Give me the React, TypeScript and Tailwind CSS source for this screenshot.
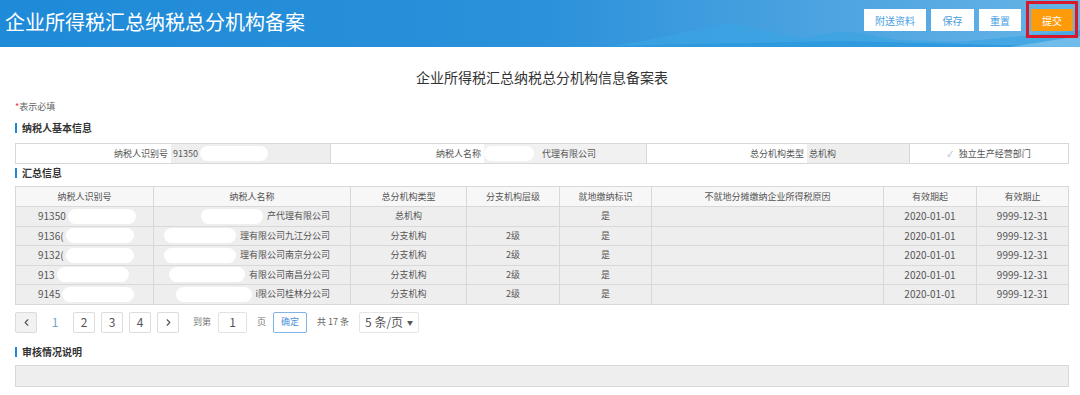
import React from "react";
import { ChevronLeft, ChevronRight } from "lucide-react";

const font = { fontFamily: '"Noto Sans CJK SC", "Noto Sans", sans-serif' };

const rows = [
  { id: "91350", name: "产代理有限公司", type: "总机构", level: "", idBlob: "w-[68px]", nameBlob: "w-[62px]" },
  { id: "9136(", name: "理有限公司九江分公司", type: "分支机构", level: "2级", idBlob: "w-[68px]", nameBlob: "w-[72px]" },
  { id: "9132(", name: "理有限公司南京分公司", type: "分支机构", level: "2级", idBlob: "w-[68px]", nameBlob: "w-[72px]" },
  { id: "913", name: "有限公司南昌分公司", type: "分支机构", level: "2级", idBlob: "w-[72px]", nameBlob: "w-[76px]" },
  { id: "9145", name: "i限公司桂林分公司", type: "分支机构", level: "2级", idBlob: "w-[72px]", nameBlob: "w-[76px]" },
];

function Blob({ w }: { w: string }) {
  return <span className={`inline-block h-[15px] shrink-0 ${w} rounded-full bg-white align-middle`} />;
}

function SectionTitle({ children }: { children: React.ReactNode }) {
  return (
    <div className="flex items-center gap-[5px] text-[10px] font-bold leading-[12px] text-[#333]">
      <span className="h-[10px] w-[2px] bg-[#1e88d8]" />
      {children}
    </div>
  );
}

function PageBox({ children, gray }: { children: React.ReactNode; gray?: boolean }) {
  return (
    <div
      className={`flex h-[21px] w-[22px] items-center justify-center rounded-[2px] border border-[#dcdcdc] text-[12px] text-[#555] ${
        gray ? "bg-[#f2f2f2]" : "bg-white"
      }`}
    >
      {children}
    </div>
  );
}

export default function App() {
  return (
    <div className="h-[395px] w-[1080px] overflow-hidden bg-white" style={font}>
      {/* header */}
      <div className="relative flex h-[47px] items-start justify-between bg-gradient-to-r from-[#1e8ad8] via-[#2a91da] to-[#66b4e6]">
        <svg className="absolute bottom-0 left-[540px] h-[47px] w-[540px]" viewBox="0 0 540 47" preserveAspectRatio="none">
          <path d="M60 47 C120 40 150 30 180 24 C200 22 220 30 250 36 C270 40 280 34 300 32 C320 31 330 36 360 40 L420 42 L540 30 L540 47 Z" fill="#3aa4e2" opacity="0.7" />
          <path d="M0 47 L160 44 L300 41 L420 44 L540 47 Z" fill="#2a97dd" opacity="0.8" />
          <path d="M470 47 L540 36 L540 47 Z" fill="#8cc9ee" opacity="0.6" />
        </svg>
        <div className="relative pl-[5px] pt-[9px] text-[20px] leading-[26px] text-white">企业所得税汇总纳税总分机构备案</div>
        <div className="relative flex items-start gap-[5px] pr-[2px] pt-[9px] text-[10px]">
          <div className="flex h-[22px] w-[62px] items-center justify-center bg-white text-[#4a9fe0]">附送资料</div>
          <div className="flex h-[22px] w-[43px] items-center justify-center bg-white text-[#4a9fe0]">保存</div>
          <div className="flex h-[22px] w-[42px] items-center justify-center bg-white text-[#4a9fe0]">重置</div>
          <div className="-mt-[8px] border-[3px] border-[#d7192b] p-[5px_2px_4px]">
            <div className="flex h-[22px] w-[42px] items-center justify-center bg-[#ff9a0a] text-white">提交</div>
          </div>
        </div>
      </div>

      <div className="pl-[15px] pr-[11px]">
        <div className="pt-[21px] text-center text-[14px] leading-[18px] text-[#333]">企业所得税汇总纳税总分机构信息备案表</div>
        <div className="mt-[15px] text-[9px] leading-[12px] text-[#666]">
          <span className="text-[#e33]">*</span>表示必填
        </div>

        <div className="mt-[9px]">
          <SectionTitle>纳税人基本信息</SectionTitle>
        </div>
        <div className="mt-[9px] grid h-[21px] grid-cols-[155px_159px_154px_162px_161px_102px_1fr] border border-[#d8d8d8] text-[9px] text-[#555]">
          <div className="flex items-center justify-end pr-[3px]">纳税人识别号</div>
          <div className="flex items-center gap-[2px] bg-[#efeeef] pl-[2px]">
            <span>91350</span>
            <Blob w="w-[68px]" />
          </div>
          <div className="flex items-center justify-end border-l border-[#d8d8d8] pr-[3px]">纳税人名称</div>
          <div className="flex items-center gap-[8px] bg-[#f2f1f2]">
            <Blob w="w-[50px]" />
            <span>代理有限公司</span>
          </div>
          <div className="flex items-center justify-end border-l border-[#d8d8d8] pr-[3px]">总分机构类型</div>
          <div className="flex items-center bg-[#efeeef] pl-[2px]">总机构</div>
          <div className="flex items-center justify-center gap-[6px] border-l border-[#d8d8d8]">
            <span className="text-[8px] text-[#aaa]">✓</span>
            <span>独立生产经营部门</span>
          </div>
        </div>

        <div className="mt-[3px]">
          <SectionTitle>汇总信息</SectionTitle>
        </div>
        <table className="mt-[7px] w-full table-fixed border-collapse text-[9px] text-[#555]">
          <colgroup>
            <col className="w-[138px]" />
            <col className="w-[197px]" />
            <col className="w-[116px]" />
            <col className="w-[93px]" />
            <col className="w-[92px]" />
            <col className="w-[232px]" />
            <col className="w-[93px]" />
            <col />
          </colgroup>
          <thead>
            <tr className="h-[20px] bg-[#f7f7f7]">
              {["纳税人识别号", "纳税人名称", "总分机构类型", "分支机构层级", "就地缴纳标识", "不就地分摊缴纳企业所得税原因", "有效期起", "有效期止"].map((h) => (
                <th key={h} className="border border-[#d8d8d8] p-0 font-normal">
                  {h}
                </th>
              ))}
            </tr>
          </thead>
          <tbody>
            {rows.map((r) => (
              <tr key={r.id} className="h-[19.5px] bg-[#efeeef] leading-[14px]">
                <td className="overflow-hidden whitespace-nowrap border border-[#d8d8d8] p-0 pl-[22px] text-[10px]">
                  <div className="flex items-center gap-[2px]">
                    <span>{r.id}</span>
                    <Blob w={r.idBlob} />
                  </div>
                </td>
                <td className="overflow-hidden whitespace-nowrap border border-[#d8d8d8] p-0">
                  <div className="flex items-center justify-end gap-[4px] pr-[20px]">
                    <Blob w={r.nameBlob} />
                    <span>{r.name}</span>
                  </div>
                </td>
                <td className="border border-[#d8d8d8] p-0 text-center">{r.type}</td>
                <td className="border border-[#d8d8d8] p-0 text-center">{r.level}</td>
                <td className="border border-[#d8d8d8] p-0 text-center">是</td>
                <td className="border border-[#d8d8d8] p-0" />
                <td className="border border-[#d8d8d8] p-0 text-center text-[10px]">2020-01-01</td>
                <td className="border border-[#d8d8d8] p-0 text-center text-[10px]">9999-12-31</td>
              </tr>
            ))}
          </tbody>
        </table>

        {/* pagination */}
        <div className="mt-[7px] flex items-center text-[9px] text-[#777]">
          <PageBox gray>
            <ChevronLeft size={11} strokeWidth={2.5} />
          </PageBox>
          <div className="flex w-[36px] justify-center text-[12px] text-[#7aa3cf]">1</div>
          <div className="flex gap-[6px]">
            <PageBox>2</PageBox>
            <PageBox>3</PageBox>
            <PageBox>4</PageBox>
            <PageBox>
              <ChevronRight size={11} strokeWidth={2.5} />
            </PageBox>
          </div>
          <span className="ml-[14px]">到第</span>
          <div className="ml-[7px] flex h-[21px] w-[29px] items-center justify-center rounded-[2px] border border-[#e2e2e2] text-[12px] text-[#555]">1</div>
          <span className="ml-[10px]">页</span>
          <div className="ml-[7px] flex h-[21px] w-[34px] items-center justify-center rounded-[2px] border border-[#7fb2e5] text-[#4a90d9]">确定</div>
          <span className="ml-[10px] text-[#666]">共 17 条</span>
          <div className="ml-[10px] flex h-[21px] w-[60px] items-center justify-between rounded-[2px] border border-[#e6e6e6] px-[5px] text-[12px] text-[#555]">
            <span>5 条/页</span>
            <span className="text-[6px]">▼</span>
          </div>
        </div>

        <div className="mt-[13px]">
          <SectionTitle>审核情况说明</SectionTitle>
        </div>
        <div className="mt-[7px] h-[22px] border border-[#d8d8d8] bg-[#efeeef]" />
      </div>
    </div>
  );
}
